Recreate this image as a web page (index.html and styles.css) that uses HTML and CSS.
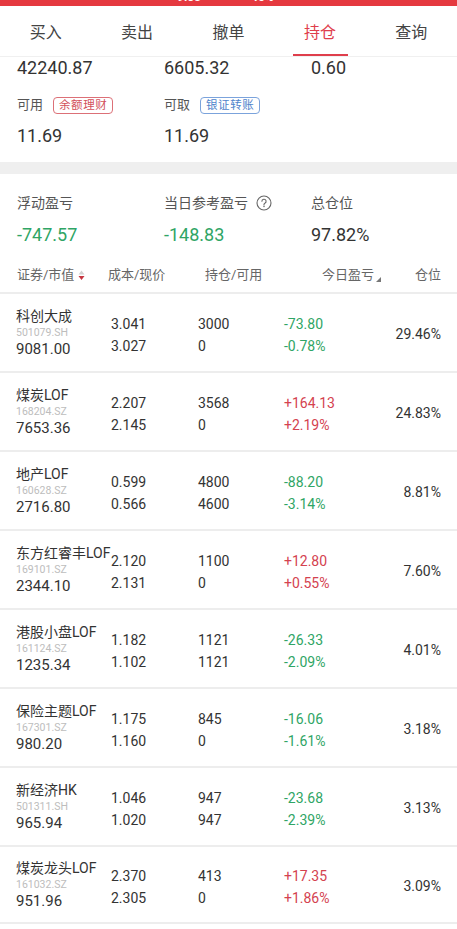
FILE: index.html
```html
<!DOCTYPE html>
<html lang="zh-CN">
<head>
<meta charset="utf-8">
<title>持仓</title>
<link rel="stylesheet" href="styles.css">
</head>
<body>
<div class="status"><span class="st-time">9:03</span><span class="st-bat">45%</span></div>
<nav class="tabs">
  <div class="tab">买入</div>
  <div class="tab">卖出</div>
  <div class="tab">撤单</div>
  <div class="tab active">持仓</div>
  <div class="tab">查询</div>
</nav>

<section class="assets">
  <div class="grid3 big">
    <div>42240.87</div><div>6605.32</div><div class="indent">0.60</div>
  </div>
  <div class="grid3 labels">
    <div class="lab">可用<span class="badge red">余额理财</span></div>
    <div class="lab">可取<span class="badge blue">银证转账</span></div>
    <div></div>
  </div>
  <div class="grid3 big v2">
    <div>11.69</div><div>11.69</div><div></div>
  </div>
</section>

<div class="band"></div>

<section class="pnl">
  <div class="grid3 plabels">
    <div>浮动盈亏</div>
    <div class="q">当日参考盈亏
      <svg class="qicon" width="16" height="16" viewBox="0 0 16 16"><circle cx="8" cy="8" r="7" fill="none" stroke="#666" stroke-width="1.1"/><path d="M5.9 6.3a2.1 2.1 0 1 1 3 1.9c-.6.3-.9.7-.9 1.3v.5" fill="none" stroke="#666" stroke-width="1.1" stroke-linecap="round"/><circle cx="8" cy="11.6" r=".75" fill="#666"/></svg>
    </div>
    <div>总仓位</div>
  </div>
  <div class="grid3 big pvals">
    <div class="g">-747.57</div><div class="g">-148.83</div><div>97.82%</div>
  </div>
</section>

<div class="thead">
  <div class="th c1">证券/市值<svg class="sort" width="7" height="11" viewBox="0 0 7 11"><polygon points="3.5,0.5 6.5,4.5 0.5,4.5" fill="#d2d2d2"/><polygon points="0.5,6 6.5,6 3.5,10" fill="#c63540"/></svg></div>
  <div class="th c2">成本/现价</div>
  <div class="th c3">持仓/可用</div>
  <div class="th c4">今日盈亏<svg class="corner" width="5" height="5" viewBox="0 0 5 5"><polygon points="5,0 5,5 0,5" fill="#777"/></svg></div>
  <div class="th c5">仓位</div>
</div>

<div class="list">
  <div class="row">
    <div class="sec"><div class="nm">科创大成</div><div class="code">501079.SH</div><div class="mv">9081.00</div></div>
    <div class="two"><div>3.041</div><div>3.027</div></div>
    <div class="two"><div>3000</div><div>0</div></div>
    <div class="two g"><div>-73.80</div><div>-0.78%</div></div>
    <div class="pct">29.46%</div>
  </div>
  <div class="row">
    <div class="sec"><div class="nm">煤炭LOF</div><div class="code">168204.SZ</div><div class="mv">7653.36</div></div>
    <div class="two"><div>2.207</div><div>2.145</div></div>
    <div class="two"><div>3568</div><div>0</div></div>
    <div class="two r"><div>+164.13</div><div>+2.19%</div></div>
    <div class="pct">24.83%</div>
  </div>
  <div class="row">
    <div class="sec"><div class="nm">地产LOF</div><div class="code">160628.SZ</div><div class="mv">2716.80</div></div>
    <div class="two"><div>0.599</div><div>0.566</div></div>
    <div class="two"><div>4800</div><div>4600</div></div>
    <div class="two g"><div>-88.20</div><div>-3.14%</div></div>
    <div class="pct">8.81%</div>
  </div>
  <div class="row">
    <div class="sec"><div class="nm">东方红睿丰LOF</div><div class="code">169101.SZ</div><div class="mv">2344.10</div></div>
    <div class="two"><div>2.120</div><div>2.131</div></div>
    <div class="two"><div>1100</div><div>0</div></div>
    <div class="two r"><div>+12.80</div><div>+0.55%</div></div>
    <div class="pct">7.60%</div>
  </div>
  <div class="row">
    <div class="sec"><div class="nm">港股小盘LOF</div><div class="code">161124.SZ</div><div class="mv">1235.34</div></div>
    <div class="two"><div>1.182</div><div>1.102</div></div>
    <div class="two"><div>1121</div><div>1121</div></div>
    <div class="two g"><div>-26.33</div><div>-2.09%</div></div>
    <div class="pct">4.01%</div>
  </div>
  <div class="row">
    <div class="sec"><div class="nm">保险主题LOF</div><div class="code">167301.SZ</div><div class="mv">980.20</div></div>
    <div class="two"><div>1.175</div><div>1.160</div></div>
    <div class="two"><div>845</div><div>0</div></div>
    <div class="two g"><div>-16.06</div><div>-1.61%</div></div>
    <div class="pct">3.18%</div>
  </div>
  <div class="row">
    <div class="sec"><div class="nm">新经济HK</div><div class="code">501311.SH</div><div class="mv">965.94</div></div>
    <div class="two"><div>1.046</div><div>1.020</div></div>
    <div class="two"><div>947</div><div>947</div></div>
    <div class="two g"><div>-23.68</div><div>-2.39%</div></div>
    <div class="pct">3.13%</div>
  </div>
  <div class="row last">
    <div class="sec"><div class="nm">煤炭龙头LOF</div><div class="code">161032.SZ</div><div class="mv">951.96</div></div>
    <div class="two"><div>2.370</div><div>2.305</div></div>
    <div class="two"><div>413</div><div>0</div></div>
    <div class="two r"><div>+17.35</div><div>+1.86%</div></div>
    <div class="pct">3.09%</div>
  </div>
</div>
</body>
</html>
```
FILE: styles.css
```css
* { box-sizing: border-box; }
html, body { margin: 0; padding: 0; background: #fff; }
body {
  width: 457px;
  height: 929px;
  overflow: hidden;
  font-family: Roboto, "Noto Sans CJK SC", sans-serif;
  color: #333;
}

.status {
  height: 6px;
  background: #e5393f;
  overflow: hidden;
  position: relative;
}
.status span {
  position: absolute;
  top: -9px;
  color: #fff;
  font-size: 12px;
  line-height: 12px;
  font-weight: 700;
}
.st-time { left: 177px; }
.st-bat { left: 251px; }

.tabs {
  display: grid;
  grid-template-columns: repeat(5, 1fr);
  height: 51px;
  border-bottom: 1px solid #f0f0f0;
}
.tab {
  display: flex;
  align-items: center;
  justify-content: center;
  font-size: 16px;
  color: #444;
  position: relative;
  padding-bottom: 1px;
}
.tab.active { color: #df3e4c; }
.tab.active::after {
  content: "";
  position: absolute;
  left: 50%;
  bottom: 0;
  width: 55px;
  margin-left: -27px;
  height: 2px;
  background: #df3e4c;
}

.grid3 {
  display: grid;
  grid-template-columns: 147px 147px 1fr;
}
.assets { padding: 0 0 15px 17px; }
.big { font-size: 18px; line-height: 22px; color: #333; }
.indent { padding-left: 0; }
.labels { margin-top: 17px; font-size: 13px; line-height: 18px; color: #555; }
.lab { display: flex; align-items: center; }
.badge {
  display: inline-block;
  margin-left: 10px;
  font-size: 11.5px;
  line-height: 15px;
  padding: 0 5px;
  border: 1px solid;
  border-radius: 4px;
  letter-spacing: 0.6px;
}
.badge.red { color: #d2505a; border-color: #dc7077; }
.badge.blue { color: #4f84cb; border-color: #7ba3dc; }
.v2 { margin-top: 11px; }

.band { height: 12px; background: #efefef; }

.pnl { padding: 0 0 0 17px; }
.plabels { margin-top: 19px; font-size: 14px; line-height: 20px; color: #555; }
.q { display: flex; align-items: center; }
.qicon { margin-left: 8px; }
.pvals { margin-top: 11px; }
.g { color: #2fa565; }
.r { color: #d4424f; }

.thead {
  display: grid;
  grid-template-columns: 91px 97px 117px 1fr auto;
  padding: 0 16px 0 17px;
  margin-top: 19px;
  height: 27px;
  font-size: 13px;
  line-height: 20px;
  color: #666;
}
.th { display: flex; align-items: flex-start; }
.sort { margin-left: 4px; margin-top: 5px; }
.corner { margin-left: 2px; margin-top: 12px; }

.row {
  display: grid;
  grid-template-columns: 95px 87px 86px 1fr auto;
  align-items: center;
  height: 79px;
  border-top: 2px solid #ededed;
  padding: 0 16px 0 16px;
}
.row.last { border-bottom: 2px solid #ededed; }
.sec { align-self: center; margin-top: 1px; }
.nm { font-size: 14px; line-height: 17px; color: #333; white-space: nowrap; }
.code { font-size: 10.5px; line-height: 16px; color: #bdbdbd; }
.mv { font-size: 15px; line-height: 17px; color: #333; }
.two { font-size: 14px; line-height: 22px; margin-top: 4px; }
.pct { font-size: 14px; color: #333; text-align: right; margin-top: 2px; }
```
